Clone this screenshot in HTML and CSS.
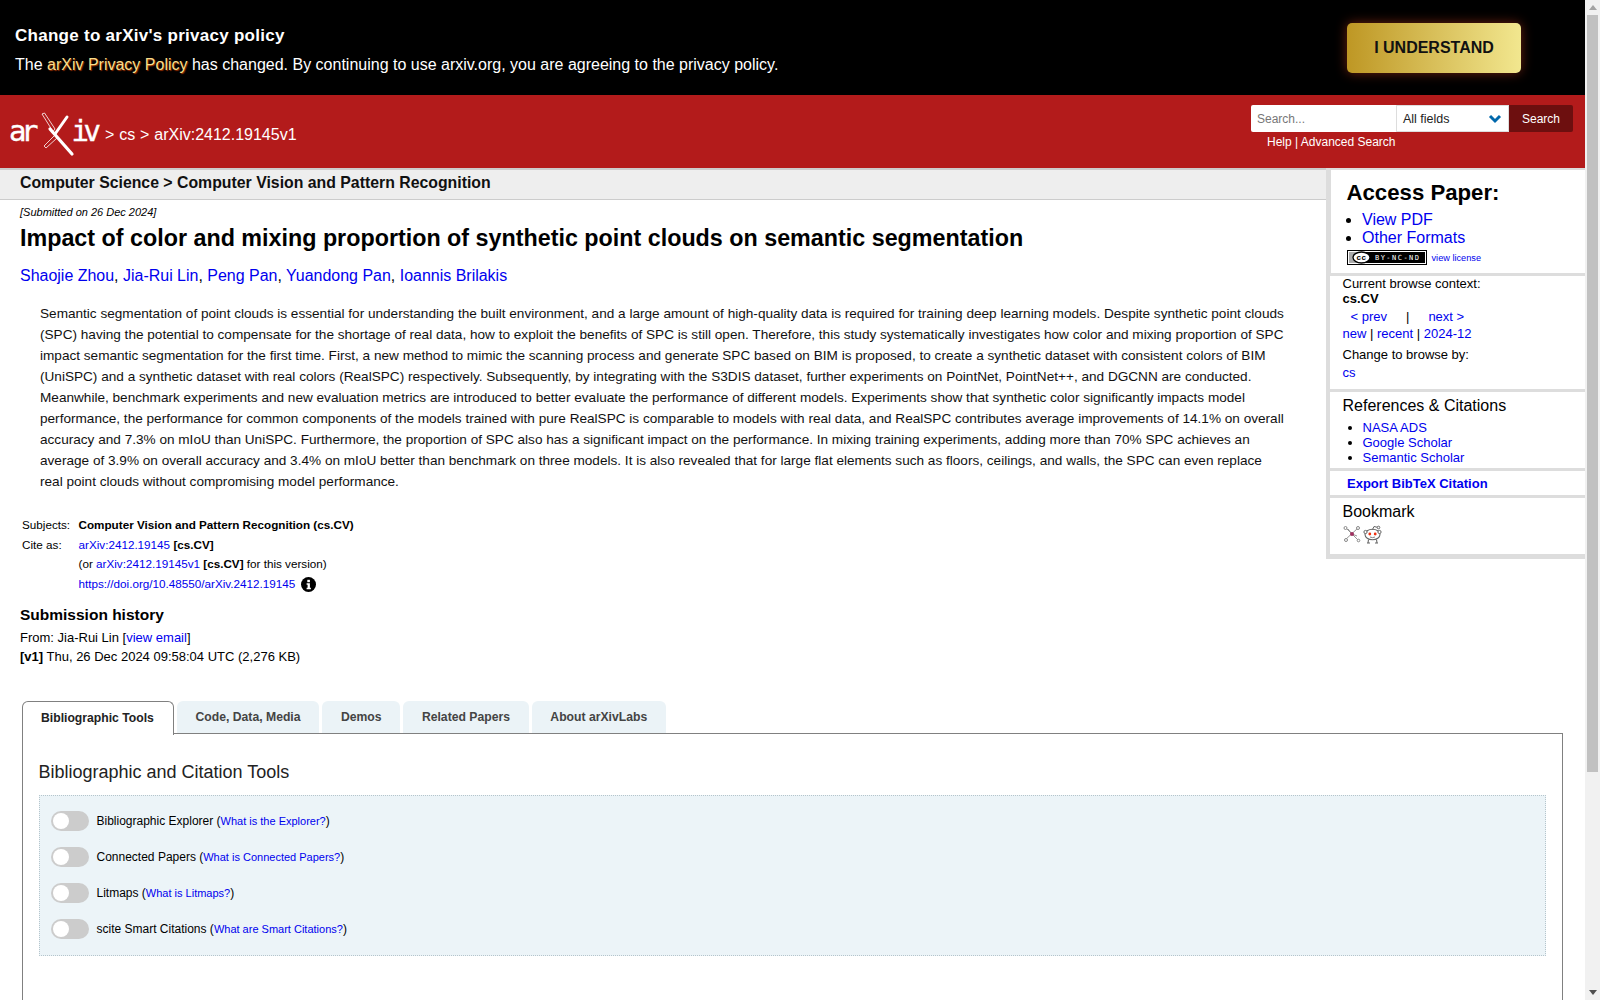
FILE: index.html
```html
<!DOCTYPE html>
<html lang="en">
<head>
    <meta charset="UTF-8">
    <title>Impact of color and mixing proportion of synthetic point clouds on semantic segmentation</title>
    <link rel="stylesheet" href="styles.css">
</head>
<body>
<div class="viewport">
    <div class="page">
        <div class="banner">
            <div class="banner-text">
                <div class="banner-title">Change to arXiv's privacy policy</div>
                <div class="banner-body">The <a href="#">arXiv Privacy Policy</a> has changed. By continuing to use arxiv.org, you are agreeing to the privacy policy.</div>
            </div>
            <button class="understand">I UNDERSTAND</button>
        </div>

        <header class="site-header">
            <div class="crumbs">
                <svg class="logo" width="92" height="46" viewBox="0 0 92 46">
                    <text x="0 12" y="30" class="logo-text">ar</text>
                    <text x="62.500 74.500" y="30" class="logo-text">iv</text>
                    <path d="M41 18 L63 43" stroke="#fff" stroke-width="3.200" stroke-linecap="round"/>
                    <path d="M58 6 L46 23" stroke="#fff" stroke-width="3" stroke-linecap="round"/>
                    <path d="M33 3 L35.500 2 L46 18 L44 20.500 Z" fill="none" stroke="#fff" stroke-width="0.800"/>
                    <path d="M46 24 L35 35 L37 37 L48 27" fill="none" stroke="#fff" stroke-width="0.800"/>
                </svg>
                <span class="crumb-text">&gt; <a href="#">cs</a> &gt; arXiv:2412.19145v1</span>
            </div>
            <div class="search-area">
                <form class="search-form">
                    <input class="search-input" placeholder="Search...">
                    <div class="search-select">All fields
                        <svg width="14" height="10" viewBox="0 0 14 10"><path d="M2 2 L7 7 L12 2" fill="none" stroke="#0068ac" stroke-width="3"/></svg>
                    </div>
                    <div class="search-btn">Search</div>
                </form>
                <div class="search-links"><a href="#">Help</a> | <a href="#">Advanced Search</a></div>
            </div>
        </header>

        <div class="content">
            <main class="main-col">
                <div class="subheader">Computer Science &gt; Computer Vision and Pattern Recognition</div>
                <div class="article">
                    <div class="dateline">[Submitted on 26 Dec 2024]</div>
                    <h1 class="title">Impact of color and mixing proportion of synthetic point clouds on semantic segmentation</h1>
                    <div class="authors"><a href="#">Shaojie Zhou</a>, <a href="#">Jia-Rui Lin</a>, <a href="#">Peng Pan</a>, <a href="#">Yuandong Pan</a>, <a href="#">Ioannis Brilakis</a></div>
                    <blockquote class="abstract">Semantic segmentation of point clouds is essential for understanding the built environment, and a large amount of high-quality data is required for training deep learning models. Despite synthetic point clouds (SPC) having the potential to compensate for the shortage of real data, how to exploit the benefits of SPC is still open. Therefore, this study systematically investigates how color and mixing proportion of SPC impact semantic segmentation for the first time. First, a new method to mimic the scanning process and generate SPC based on BIM is proposed, to create a synthetic dataset with consistent colors of BIM (UniSPC) and a synthetic dataset with real colors (RealSPC) respectively. Subsequently, by integrating with the S3DIS dataset, further experiments on PointNet, PointNet++, and DGCNN are conducted. Meanwhile, benchmark experiments and new evaluation metrics are introduced to better evaluate the performance of different models. Experiments show that synthetic color significantly impacts model performance, the performance for common components of the models trained with pure RealSPC is comparable to models with real data, and RealSPC contributes average improvements of 14.1% on overall accuracy and 7.3% on mIoU than UniSPC. Furthermore, the proportion of SPC also has a significant impact on the performance. In mixing training experiments, adding more than 70% SPC achieves an average of 3.9% on overall accuracy and 3.4% on mIoU better than benchmark on three models. It is also revealed that for large flat elements such as floors, ceilings, and walls, the SPC can even replace real point clouds without compromising model performance.</blockquote>
                    <table class="metatable">
                        <tr><td class="label">Subjects:</td><td><b>Computer Vision and Pattern Recognition (cs.CV)</b></td></tr>
                        <tr><td class="label">Cite as:</td><td><a href="#">arXiv:2412.19145</a> <b>[cs.CV]</b></td></tr>
                        <tr class="short-row"><td></td><td>(or <a href="#">arXiv:2412.19145v1</a> <b>[cs.CV]</b> for this version)</td></tr>
                        <tr><td></td><td><a href="#">https://doi.org/10.48550/arXiv.2412.19145</a>
                            <svg class="info-icon" width="15" height="15" viewBox="0 0 15 15"><circle cx="7.500" cy="7.500" r="7.500" fill="#000"/><rect x="6.300" y="2.800" width="2.600" height="2.400" fill="#fff"/><path d="M5.600 6.300h3.300v4.500h1v1.500H5.600v-1.500h1V7.800h-1z" fill="#fff"/></svg>
                        </td></tr>
                    </table>
                    <div class="submission">
                        <h2>Submission history</h2>
                        <div>From: Jia-Rui Lin [<a href="#">view email</a>]</div>
                        <div><b>[v1]</b> Thu, 26 Dec 2024 09:58:04 UTC (2,276 KB)</div>
                    </div>
                </div>
            </main>

            <aside class="sidebar">
                <div class="side-box access">
                    <h2>Access Paper:</h2>
                    <ul>
                        <li><a href="#">View PDF</a></li>
                        <li><a href="#">Other Formats</a></li>
                    </ul>
                    <div class="license">
                        <svg width="80" height="15" viewBox="0 0 80 15">
                            <rect width="80" height="15" fill="#000"/>
                            <rect x="1" y="1" width="78" height="13" fill="#fff"/>
                            <rect x="2" y="2" width="76" height="11" fill="#000"/>
                            <rect x="2" y="2" width="12" height="11" fill="#aaa"/>
                            <ellipse cx="14.500" cy="7.500" rx="8.500" ry="5.500" fill="#fff" stroke="#000" stroke-width="1.300"/>
                            <text x="14.500" y="10" class="cc-mark">cc</text>
                            <text x="28" y="10.200" textLength="44" class="cc-text">BY-NC-ND</text>
                        </svg>
                        <a href="#">view license</a>
                    </div>
                </div>
                <div class="side-box browse">
                    <div>Current browse context:</div>
                    <div class="ctx">cs.CV</div>
                    <div class="prevnext"><a href="#">&lt; prev</a><span>|</span><a href="#">next &gt;</a></div>
                    <div class="row"><a href="#">new</a> | <a href="#">recent</a> | <a href="#">2024-12</a></div>
                    <div class="row change">Change to browse by:</div>
                    <div class="row"><a href="#">cs</a></div>
                </div>
                <div class="side-box refs">
                    <h3>References &amp; Citations</h3>
                    <ul>
                        <li><a href="#">NASA ADS</a></li>
                        <li><a href="#">Google Scholar</a></li>
                        <li><a href="#">Semantic Scholar</a></li>
                    </ul>
                </div>
                <div class="side-box export"><a href="#">Export BibTeX Citation</a></div>
                <div class="side-box bookmark">
                    <h3>Bookmark</h3>
                    <div class="bm-icons">
                        <svg width="18" height="18" viewBox="0 0 18 18">
                            <path d="M2 2 L16 16 M15 3 L2 15 M9 9 L5 4 M9 9 L14 11" stroke="#888" stroke-width="0.900" fill="none"/>
                            <circle cx="2.500" cy="3" r="1.500" fill="#fff" stroke="#888"/>
                            <circle cx="15" cy="3" r="1.500" fill="#fff" stroke="#888"/>
                            <circle cx="3" cy="15" r="1.500" fill="#fff" stroke="#888"/>
                            <circle cx="15.500" cy="15.500" r="1.300" fill="#fff" stroke="#888"/>
                            <circle cx="9" cy="9" r="2" fill="#a03060"/>
                        </svg>
                        <svg width="19" height="19" viewBox="0 0 19 19">
                            <ellipse cx="9.500" cy="9.500" rx="7.500" ry="5.200" fill="#fff" stroke="#666" stroke-width="1.100"/>
                            <path d="M9.500 4.500 L11 1.500 L14.500 2.300" fill="none" stroke="#666"/>
                            <circle cx="15.500" cy="2.500" r="1.300" fill="#fff" stroke="#666"/>
                            <circle cx="2.500" cy="7" r="1.600" fill="#fff" stroke="#666"/>
                            <circle cx="16.500" cy="7" r="1.600" fill="#fff" stroke="#666"/>
                            <circle cx="6.800" cy="9" r="1.400" fill="#f03010"/>
                            <circle cx="12.200" cy="9" r="1.400" fill="#f03010"/>
                            <path d="M7 12 Q9.500 13.300 12 12" fill="none" stroke="#666" stroke-width="0.800"/>
                            <path d="M5.500 14.500 L5 18 M13.500 14.500 L14 18 M4 18 h3 M12 18 h3" stroke="#666" stroke-width="1.100" fill="none"/>
                        </svg>
                    </div>
                </div>
            </aside>
        </div>

        <section class="labs">
            <div class="tabs">
                <div class="tab active">Bibliographic Tools</div>
                <div class="tab">Code, Data, Media</div>
                <div class="tab">Demos</div>
                <div class="tab">Related Papers</div>
                <div class="tab">About arXivLabs</div>
            </div>
            <div class="tab-panel">
                <h2>Bibliographic and Citation Tools</h2>
                <div class="tool-box">
                    <div class="tool"><span class="toggle"></span><span>Bibliographic Explorer (<a href="#">What is the Explorer?</a>)</span></div>
                    <div class="tool"><span class="toggle"></span><span>Connected Papers (<a href="#">What is Connected Papers?</a>)</span></div>
                    <div class="tool"><span class="toggle"></span><span>Litmaps (<a href="#">What is Litmaps?</a>)</span></div>
                    <div class="tool"><span class="toggle"></span><span>scite Smart Citations (<a href="#">What are Smart Citations?</a>)</span></div>
                </div>
            </div>
        </section>
    </div>

    <div class="scrollbar">
        <div class="sb-arrow sb-up"></div>
        <div class="sb-track"><div class="sb-thumb"></div></div>
        <div class="sb-arrow sb-down"></div>
    </div>
</div>
</body>
</html>
```

FILE: styles.css
```css
html, body {
    margin: 0;
    padding: 0;
    height: 1000px;
    overflow: hidden;
}
body {
    font-family: "Liberation Sans", Arial, sans-serif;
    font-size: 14px;
    color: #000;
    background: #fff;
}
a {
    color: #0000ee;
    text-decoration: none;
}
.viewport {
    display: flex;
    height: 1000px;
}
.page {
    width: 1585px;
    height: 1000px;
    overflow: hidden;
}

/* privacy banner */
.banner {
    background: #000;
    height: 95px;
    display: flex;
    align-items: center;
    justify-content: space-between;
    padding: 0 64px 0 15px;
    color: #fff;
}
.banner-text {
    padding-top: 5px;
}
.banner-title {
    font-size: 17px;
    font-weight: bold;
    letter-spacing: 0.27px;
    margin-bottom: 10px;
}
.banner-body {
    font-size: 16px;
}
.banner-body a {
    color: #f7df8c;
    text-shadow: 1px 1px 1px rgba(200, 60, 0, 0.8);
}
.understand {
    width: 174px;
    height: 50px;
    border: none;
    border-radius: 5px;
    background: linear-gradient(to right, #be9724, #f2e78f);
    box-shadow: 0 0 12px rgba(200, 60, 30, 0.55);
    font-family: inherit;
    font-size: 16px;
    font-weight: bold;
    color: #111;
}

/* red header */
.site-header {
    background: #b31b1b;
    height: 73px;
    display: flex;
    justify-content: space-between;
    padding: 10px 12px 0 9px;
    box-sizing: border-box;
    color: #fff;
}
.crumbs {
    display: flex;
    align-items: center;
    height: 56px;
}
.logo {
    margin-top: 2px;
}
.logo-text {
    font-family: "DejaVu Sans Mono", monospace;
    font-size: 29px;
    fill: #fff;
    stroke: #fff;
    stroke-width: 0.4px;
}
.crumb-text {
    font-size: 16px;
    margin: 4px 0 0 4px;
    word-spacing: 0.4px;
}
.crumb-text a {
    color: #fff;
}
.search-form {
    display: flex;
    height: 27px;
}
.search-input {
    width: 145px;
    height: 27px;
    box-sizing: border-box;
    border: none;
    border-radius: 2px 0 0 2px;
    padding: 0 6px;
    font-family: inherit;
    font-size: 12px;
}
.search-input::placeholder {
    color: #777;
}
.search-select {
    width: 113px;
    height: 27px;
    box-sizing: border-box;
    background: #fff;
    border: 1px solid #ddd;
    color: #222;
    font-size: 12.500px;
    line-height: 26px;
    padding-left: 6px;
    position: relative;
}
.search-select svg {
    position: absolute;
    right: 6px;
    top: 8px;
}
.search-btn {
    width: 64px;
    height: 27px;
    background: #6d0f0f;
    border-radius: 0 2px 2px 0;
    font-size: 12px;
    line-height: 29px;
    text-align: center;
}
.search-links {
    font-size: 12px;
    margin: 3px 0 0 16px;
}
.search-links a {
    color: #fff;
}

/* abstract column */
.content {
    display: flex;
    height: 533px;
}
.main-col {
    width: 1326px;
}
.subheader {
    background: #eee;
    height: 32px;
    box-sizing: border-box;
    border-top: 2px solid #ccc;
    border-bottom: 1px solid #ccc;
    padding-left: 20px;
    font-size: 15.830px;
    font-weight: bold;
    line-height: 25px;
    color: #111;
}
.article {
    padding: 0 40px 0 20px;
}
.dateline {
    font-size: 11px;
    font-style: italic;
    margin-top: 6px;
    height: 14px;
}
.title {
    font-size: 23.300px;
    font-weight: bold;
    margin: 4px 0 0;
    line-height: 28px;
}
.authors {
    font-size: 15.970px;
    margin-top: 15px;
}
.abstract {
    font-size: 13.600px;
    line-height: 21px;
    margin: 18px 0 0 20px;
    color: #111;
}
.metatable {
    border-spacing: 2px;
    font-size: 11.700px;
    margin: 22px 0 0 -1px;
    border-collapse: separate;
}
.metatable td {
    padding: 1px;
    height: 16px;
    line-height: 16px;
    vertical-align: top;
}
.metatable .short-row td {
    height: 15px;
    line-height: 14px;
}
.metatable .label {
    width: 52.500px;
}
.info-icon {
    vertical-align: -2px;
    margin: -2px 0 -2px 2px;
}
.submission {
    font-size: 13px;
    line-height: 18.500px;
    margin-top: 10px;
}
.submission h2 {
    font-size: 15.500px;
    margin: 0 0 4px;
    line-height: 20px;
}

/* right hand sidebar */
.sidebar {
    width: 259px;
    height: 391px;
    box-sizing: border-box;
    background: #ddd;
    padding: 2px 0 5px 4px;
    display: flex;
    flex-direction: column;
    gap: 3px;
}
.side-box {
    background: #fff;
    padding-left: 12.500px;
    font-size: 13px;
}
.access {
    height: 103px;
    padding-left: 15.500px;
    margin-left: 1px;
}
.access h2 {
    font-size: 22.200px;
    margin: 0;
    padding-top: 9px;
    line-height: 28px;
}
.access ul {
    margin: 4px 0 0;
    padding-left: 15.500px;
    font-size: 16px;
    line-height: 18px;
}
.license {
    display: flex;
    align-items: center;
    gap: 5px;
    font-size: 9.200px;
    margin-top: 3px;
}
.cc-mark {
    font-family: "Liberation Sans", sans-serif;
    font-size: 8px;
    font-weight: bold;
    letter-spacing: 0.5px;
    text-anchor: middle;
    fill: #000;
}
.cc-text {
    font-family: "DejaVu Sans Mono", monospace;
    font-size: 7px;
    fill: #fff;
}
.browse {
    height: 113px;
    line-height: 15px;
}
.browse .ctx {
    font-weight: bold;
}
.prevnext {
    display: flex;
    margin: 2px 0 0 8px;
    line-height: 17px;
}
.prevnext span {
    margin: 0 19px;
}
.browse .row {
    line-height: 18px;
}
.change {
    margin-top: 3px;
}
.refs {
    height: 76px;
}
.refs h3, .bookmark h3 {
    font-size: 16px;
    font-weight: normal;
    margin: 0;
    line-height: 20px;
    padding-top: 4px;
}
.refs ul {
    margin: 4px 0 0;
    padding-left: 20px;
    line-height: 15px;
}
.export {
    height: 24px;
    line-height: 26px;
    padding-left: 17px;
    font-weight: bold;
}
.bookmark {
    flex: 1;
}
.bm-icons {
    display: flex;
    gap: 2px;
    margin-top: 3px;
}

/* labs tabs */
.labs {
    padding: 0 22px;
}
.tabs {
    display: flex;
    gap: 3px;
    height: 33px;
}
.tab {
    box-sizing: border-box;
    height: 32px;
    padding: 0 18.700px;
    background: #ebf3f7;
    border-radius: 6px 6px 0 0;
    font-size: 12.200px;
    font-weight: bold;
    line-height: 33px;
    color: #444;
}
.tab.active {
    height: 34px;
    padding: 0 19px 0 18px;
    background: #fff;
    color: #222;
    border: 1px solid #808080;
    border-bottom: none;
    position: relative;
    z-index: 1;
    line-height: 32px;
}
.tab-panel {
    border: 1px solid #808080;
    height: 300px;
    padding: 0 16px;
    margin-top: -1px;
}
.tab-panel h2 {
    font-size: 18px;
    font-weight: normal;
    margin: 26px 0 11px -0.500px;
    line-height: 24px;
    color: #222;
}
.tool-box {
    background: #ecf4f8;
    border: 1px dotted #b5c5cc;
    height: 161px;
    box-sizing: border-box;
    padding: 15px 11px;
    display: flex;
    flex-direction: column;
    gap: 16px;
    font-size: 12px;
}
.tool a {
    font-size: 11px;
}
.tool {
    display: flex;
    align-items: center;
    gap: 7.500px;
    height: 20px;
}
.toggle {
    width: 38px;
    height: 20px;
    border-radius: 10px;
    background: #ccc;
    position: relative;
}
.toggle::after {
    content: "";
    position: absolute;
    left: 2px;
    top: 2px;
    width: 16px;
    height: 16px;
    border-radius: 50%;
    background: #fff;
}

/* scrollbar */
.scrollbar {
    width: 15px;
    height: 1000px;
    background: #f1f1f1;
    display: flex;
    flex-direction: column;
}
.sb-arrow {
    width: 0;
    height: 0;
    margin: 5px auto;
    border-left: 4px solid transparent;
    border-right: 4px solid transparent;
}
.sb-up {
    border-bottom: 5px solid #a3a3a3;
}
.sb-down {
    border-top: 5px solid #505050;
}
.sb-track {
    flex: 1;
    padding: 0 2px;
}
.sb-thumb {
    height: 757px;
    background: #c1c1c1;
}
```
